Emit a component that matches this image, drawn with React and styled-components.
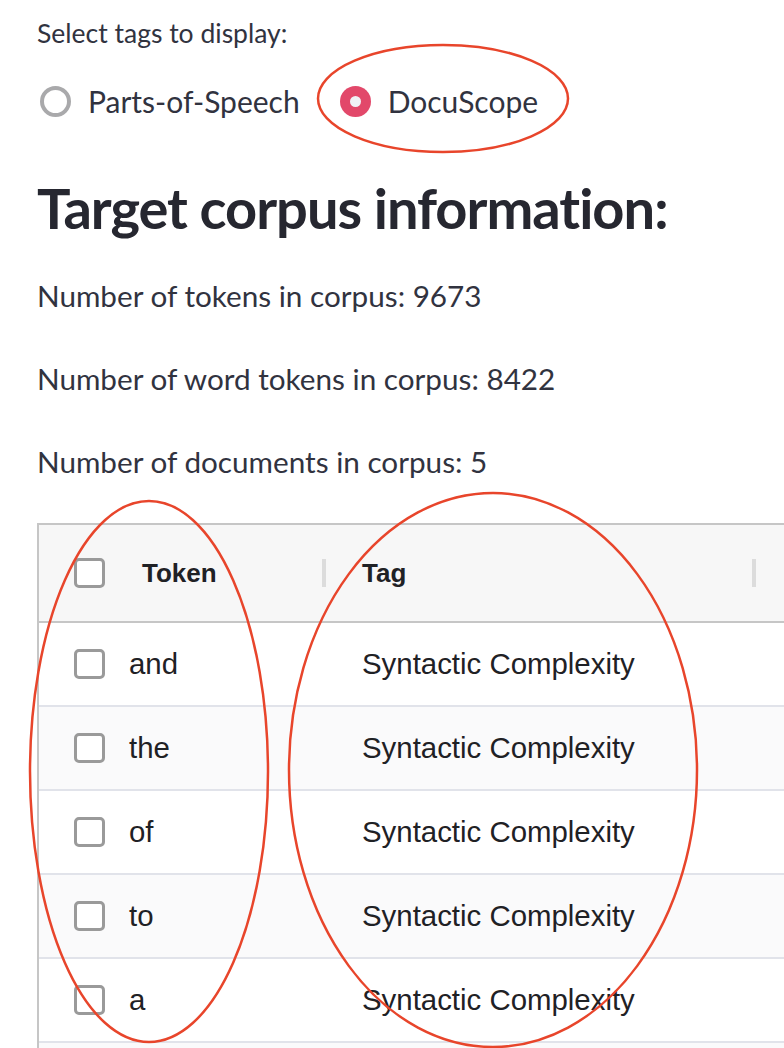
import React from 'react';
import styled, { createGlobalStyle } from 'styled-components';

const GlobalStyle = createGlobalStyle`
    html, body {
        margin: 0;
        padding: 0;
        background: #ffffff;
    }
    body {
        font-family: Lato, "Noto Sans", sans-serif;
        font-variant-ligatures: none;
        color: #31333f;
        overflow: hidden;
    }
`;

const Page = styled.div`
    position: relative;
    width: 784px;
    height: 1048px;
    overflow: hidden;
    padding-left: 37px;
    box-sizing: border-box;
`;

const Label = styled.div`
    margin-top: 15px;
    font-size: 26.5px;
    line-height: 36px;
`;

const RadioRow = styled.div`
    margin-top: 26px;
    height: 48px;
    display: flex;
    align-items: center;
    gap: 37px;
`;

const RadioItem = styled.label`
    display: flex;
    align-items: center;
    gap: 17px;
    font-size: 30px;
`;

const RadioDot = styled.span`
    width: 31px;
    height: 31px;
    border-radius: 50%;
    box-sizing: border-box;
    margin-left: 3px;
    display: flex;
    align-items: center;
    justify-content: center;
    border: ${p => (p.checked ? 'none' : '4px solid #a9a9ab')};
    background: ${p => (p.checked ? '#e2486a' : '#ffffff')};

    &::after {
        content: '';
        display: ${p => (p.checked ? 'block' : 'none')};
        width: 11px;
        height: 11px;
        border-radius: 50%;
        background: #f0f2f6;
    }
`;

const Heading = styled.h2`
    margin: 48px 0 0;
    font-size: 56px;
    line-height: 70px;
    letter-spacing: -1px;
    font-weight: 700;
    color: #262730;
`;

const Para = styled.p`
    margin: ${p => (p.first ? '33px' : '43px')} 0 0;
    font-size: 29.7px;
    line-height: 40px;
`;

const Table = styled.div`
    margin-top: 41px;
    width: 900px;
    border-top: 2px solid #c6c6c6;
    border-left: 2px solid #c6c6c6;
    font-family: "Liberation Sans", Arial, sans-serif;
    color: #1f2125;
`;

const Row = styled.div`
    display: grid;
    grid-template-columns: 285px 430px 1fr;
    height: ${p => (p.header ? '96px' : '82px')};
    background: ${p => (p.header ? '#f7f7f7' : p.shade ? '#fafafb' : '#ffffff')};
    border-bottom: 2px solid ${p => (p.header ? '#c6c6c6' : '#e1e3ea')};
`;

const Cell = styled.div`
    position: relative;
    display: flex;
    align-items: center;
    padding-left: ${p => p.pad || 0}px;
    font-size: ${p => (p.header ? '26px' : '29.4px')};
    font-weight: ${p => (p.header ? 700 : 400)};
`;

const Box = styled.span`
    width: 31px;
    height: 30px;
    box-sizing: border-box;
    border: 3px solid #9a9a9a;
    border-radius: 5px;
    background: #ffffff;
    margin-right: ${p => p.gap}px;
    flex-shrink: 0;
`;

const Divider = styled.span`
    position: absolute;
    right: -2px;
    top: 50%;
    width: 4px;
    height: 28px;
    margin-top: -14px;
    background: #dcdcdc;
`;

const Marks = styled.svg`
    position: absolute;
    left: 0;
    top: 0;
    pointer-events: none;
`;

const rows = ['and', 'the', 'of', 'to', 'a'];

export default function App() {
    return (
        <Page>
            <GlobalStyle />
            <Label>Select tags to display:</Label>
            <RadioRow>
                <RadioItem><RadioDot />Parts-of-Speech</RadioItem>
                <RadioItem><RadioDot checked />DocuScope</RadioItem>
            </RadioRow>
            <Heading>Target corpus information:</Heading>
            <Para first>Number of tokens in corpus: 9673</Para>
            <Para>Number of word tokens in corpus: 8422</Para>
            <Para>Number of documents in corpus: 5</Para>
            <Table>
                <Row header>
                    <Cell header pad={35}><Box gap={37} />Token<Divider /></Cell>
                    <Cell header pad={38}>Tag<Divider /></Cell>
                    <Cell header />
                </Row>
                {rows.map((t, i) => (
                    <Row key={t} shade={i % 2 === 1}>
                        <Cell pad={35}><Box gap={24} />{t}</Cell>
                        <Cell pad={38}>Syntactic Complexity</Cell>
                        <Cell />
                    </Row>
                ))}
                <Row shade />
            </Table>
            <Marks width="784" height="1048" viewBox="0 0 784 1048">
                <g fill="none" stroke="#e8452b" strokeWidth="2.5">
                    <ellipse cx="443" cy="98.5" rx="125" ry="53.5" />
                    <ellipse cx="149" cy="771.5" rx="119" ry="270.5" />
                    <ellipse cx="493" cy="770" rx="204" ry="277" />
                </g>
            </Marks>
        </Page>
    );
}
